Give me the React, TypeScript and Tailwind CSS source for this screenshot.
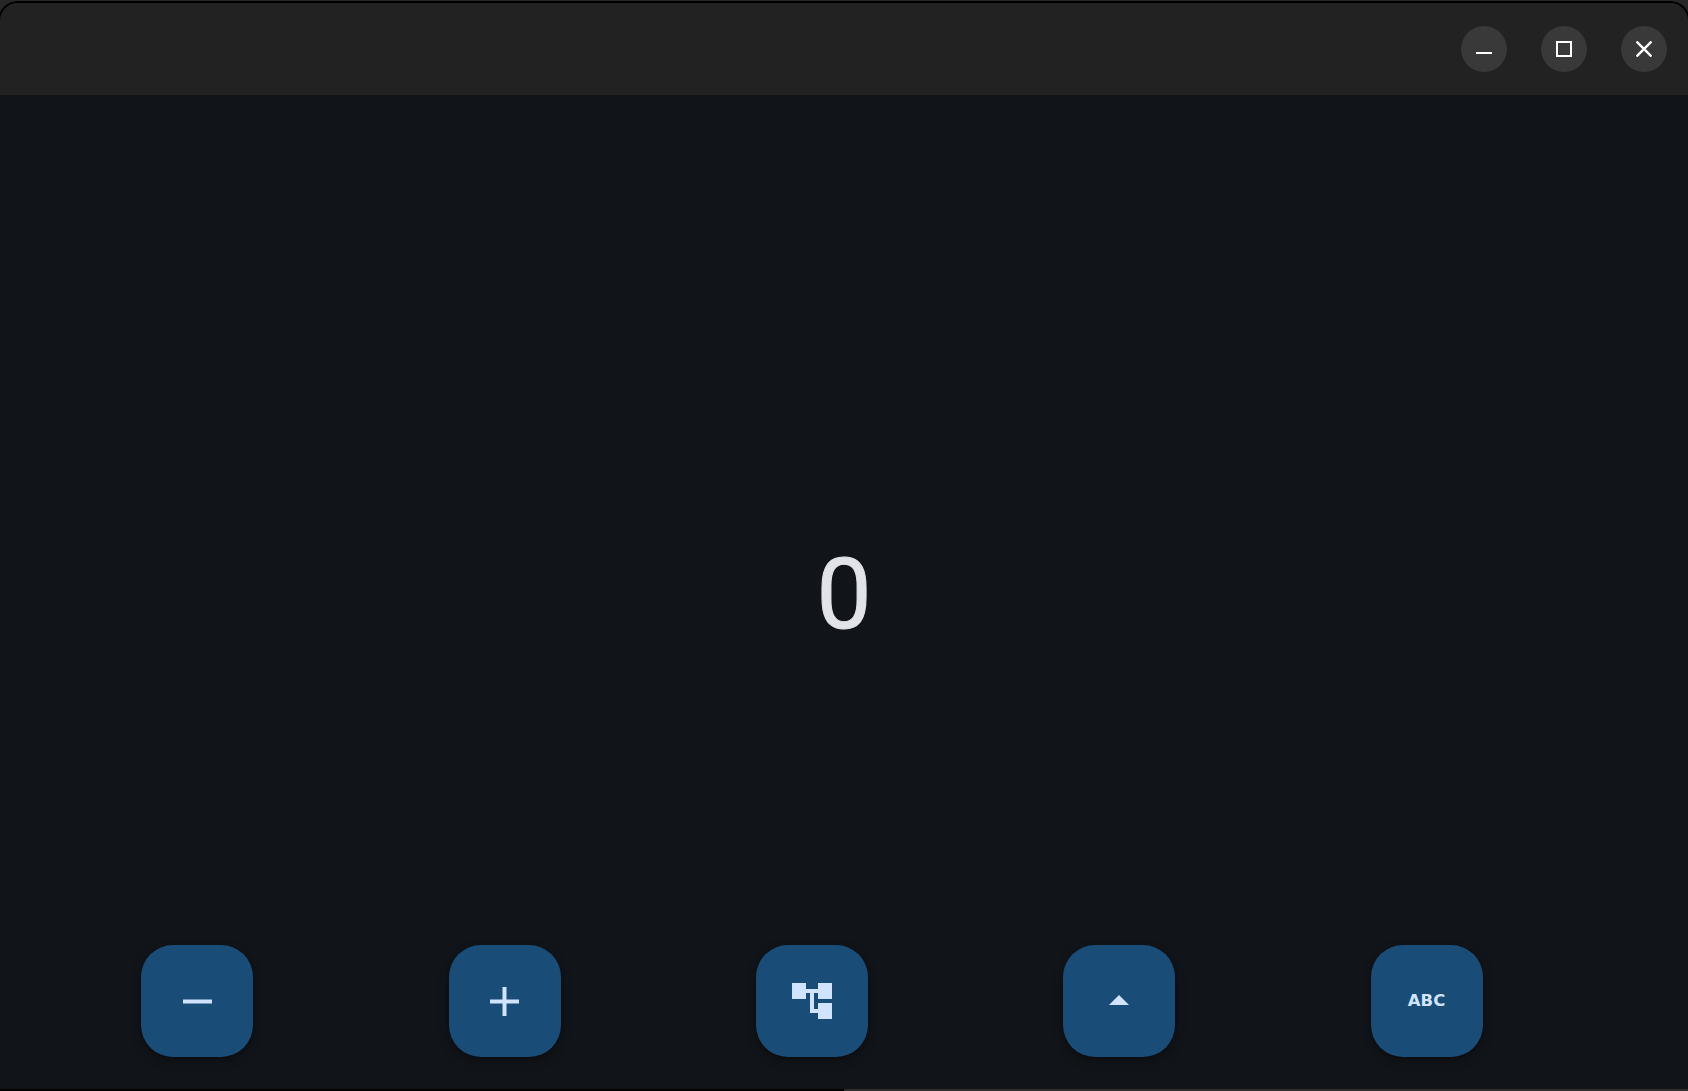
const FabIcon = ({ name }: { name: string }) => {
  if (name === "minus")
    return (
      <svg width="29" height="5" viewBox="0 0 29 5" fill="#d1e4ff">
        <path d="M0 .5h29v4H0z" />
      </svg>
    );
  if (name === "plus")
    return (
      <svg width="29" height="29" viewBox="0 0 29 29" fill="#d1e4ff">
        <path d="M12.5 0h4v12.5h12.5v4H16.5v12.5h-4V16.5H0v-4h12.5z" />
      </svg>
    );
  if (name === "tree")
    return (
      <svg width="40" height="36" viewBox="0 0 40 36" fill="#d1e4ff">
        <path d="M0 0h14v6h12V0h14v16H26v-6h-4v16h4v-6h14v16H26v-6h-8V10h-4v6H0z" />
      </svg>
    );
  if (name === "up")
    return (
      <svg width="20" height="10" viewBox="0 0 20 10" fill="#d1e4ff" className="mb-[2px]">
        <path d="M10 0l10 10H0z" />
      </svg>
    );
  return (
    <span className="font-['DejaVu_Sans'] text-[16.5px] font-bold leading-none text-[#d1e4ff]">
      ABC
    </span>
  );
};

const WinButton = ({ children }: { children: React.ReactNode }) => (
  <button className="flex h-[46px] w-[46px] items-center justify-center rounded-full bg-[#393939]">
    {children}
  </button>
);

export default function App() {
  return (
    <div className="flex h-[1091px] w-[1688px] flex-col overflow-hidden bg-[#262626] pt-[1px]">
      <div className="-mx-[2px] flex h-[1088px] flex-col overflow-hidden rounded-t-[20px] border-x-2 border-t-2 border-black bg-[#111418]">
        <header className="flex h-[92px] shrink-0 items-center justify-end gap-[34px] bg-[#222222] pr-[21px] pb-[1px]">
          <WinButton>
            <span className="mt-[9px] h-[2px] w-[16px] bg-white" />
          </WinButton>
          <WinButton>
            <span className="h-[16px] w-[16px] border-2 border-white" />
          </WinButton>
          <WinButton>
            <svg width="16" height="16" viewBox="0 0 16 16" stroke="#ffffff" strokeWidth="2.4">
              <path d="M0.5 0.5l15 15M15.5 0.5l-15 15" />
            </svg>
          </WinButton>
        </header>
        <main className="relative flex flex-1 items-center justify-center">
          <span className="mt-[5px] font-['Roboto'] text-[98px] leading-none text-[#e2e2e9] [-webkit-text-stroke:1px_#e2e2e9]">
            0
          </span>
          <div className="absolute inset-x-0 bottom-[32px] flex justify-between pr-[205.4px] pl-[141.4px]">
            {["minus", "plus", "tree", "up", "abc"].map((name) => (
              <button
                key={name}
                className="flex h-[112px] w-[112px] items-center justify-center rounded-[32px] bg-[#1a4c78] shadow-[0_4px_8px_3px_rgba(0,0,0,0.15),0_1px_3px_rgba(0,0,0,0.3)]"
              >
                <FabIcon name={name} />
              </button>
            ))}
          </div>
        </main>
      </div>
      <div className="flex h-[2px] shrink-0">
        <div className="w-[844px] bg-black" />
        <div className="flex-1 bg-[#2e2e2e]" />
      </div>
    </div>
  );
}
